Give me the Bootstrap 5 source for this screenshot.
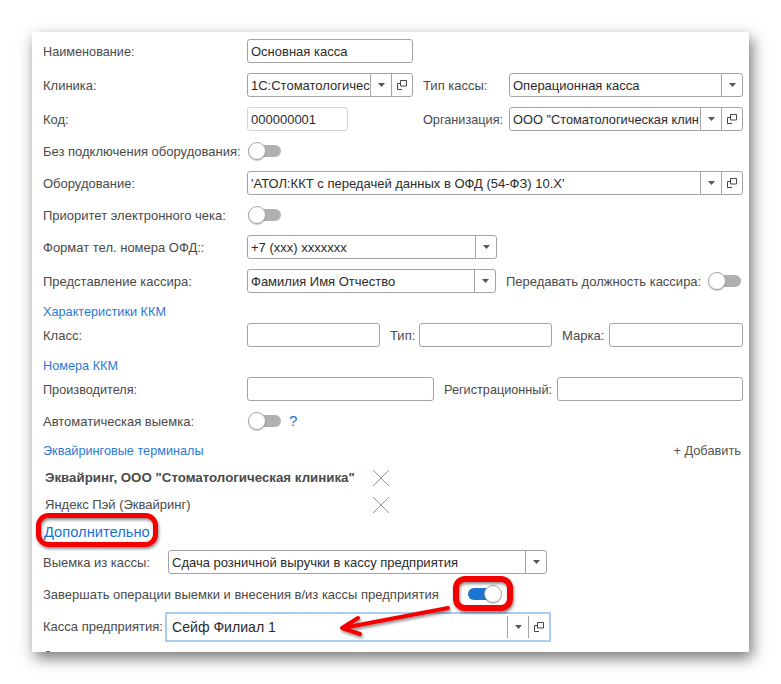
<!DOCTYPE html>
<html lang="ru">
<head>
<meta charset="utf-8">
<title>Касса</title>
<link href="https://cdn.jsdelivr.net/npm/bootstrap@5.3.0/dist/css/bootstrap.min.css" rel="stylesheet">
<style>
html,body{height:100%;overflow:hidden;background:#fff}
body{font-family:"Liberation Sans",Arial,sans-serif;font-size:13px;line-height:16px;color:#4a4a4a}
.sheet{position:relative;width:717px;height:620px;margin:32px 0 0 32px;padding:7px 6px 0 11px;background:#fff;box-shadow:3px 6px 14px rgba(0,0,0,.55);overflow:hidden}
.frow{height:24px;margin-bottom:10px}
.frow.low{height:20px}
.lbl{white-space:nowrap;flex:none;padding-top:1px}
.tight{font-size:12.700px}
.w204{width:204px}
.w125{width:125px}
.w122{width:122px}
.fld{height:24px;border:1px solid #a3a3a3;border-radius:3px;background:#fff;color:#2b2b2b;min-width:0;flex:none;overflow:hidden}
.fld.soft{border-color:#d5d5d5}
.fld.grow{flex:1 1 0}
.val{flex:1 1 0;min-width:0;padding:1px 3px 0;white-space:nowrap;overflow:hidden}
.val.fit{font-size:12.800px;padding-right:0}
.sb{flex:none;width:21px;height:100%;border-left:1px solid #a3a3a3;display:flex;align-items:center;justify-content:center}
.sb svg{display:block}
.sect{height:16px;margin-bottom:4px;color:#2a7ad8;padding-top:1px;font-size:12.700px}
.sect-t{height:18px;margin-bottom:5px;color:#2a7ad8;padding-top:1px;font-size:12.700px}
.tog{flex:none;position:relative;width:34px;height:20px}
.tog .trk{position:absolute;left:2px;right:0;top:4px;height:12px;border-radius:6px;background:#b0b0b0}
.tog .knb{position:absolute;left:1px;top:1px;width:18px;height:18px;border-radius:50%;background:#fff;border:1px solid #a6a6a6;box-shadow:0 1px 1px rgba(0,0,0,.2)}
.tog.on .trk{background:#1b74d0;right:2px;left:0}
.tog.on .knb{left:16px}
.term{height:27px;padding-left:2px}
.term .nm{width:327px;white-space:nowrap}
.b600{font-weight:700;font-size:13.300px}
.focusf{height:30px;border:2px solid #a9ccf2;border-radius:0;width:386px}
.focusf .sb{height:22px}
.focusf .val{padding:0 3px 1px 5px;font-size:14.100px}
.adv{margin:6px 0 10px 1px;height:16px;color:#1a73d4;text-decoration:none;display:block;width:max-content;font-size:14.700px}
.mrk{position:absolute;left:0;top:0;width:781px;height:684px;pointer-events:none;overflow:visible}
.w166{width:166px}.w101{width:101px}.w250{width:250px}.w249{width:249px}.w133{width:133px}.w187{width:187px}.w379{width:379px}.w86{width:86px}.w425{width:425px}
.w29{width:29px}.w47{width:47px}.w113{width:113px}
.flex-none{flex:none}.ms-10p{margin-left:10px}
.qm{margin-left:8px;color:#1a6fc0;font-size:15px}
.addb{padding-right:2px;color:#555;font-size:12.800px}
.finr{margin-bottom:0;height:30px}
.finr .lbl{padding-top:0}
.fin{margin-bottom:8px}
.pr2p{padding-right:2px}
.cutmark{width:4px;height:2px;margin:9px 0 0 3px;background:#2a7ad8}
</style>
</head>
<body>
<main class="sheet">
  <div class="frow d-flex align-items-center"><span class="lbl w204 tight">Наименование:</span><div class="fld d-flex align-items-center w166"><div class="val">Основная касса</div></div></div>
  <div class="frow d-flex align-items-center">
    <span class="lbl w204">Клиника:</span>
    <div class="fld d-flex align-items-center w166"><div class="val">1С:Стоматологичес</div><div class="sb"><svg width="7" height="4" viewBox="0 0 7 4"><path d="M0 0h7L3.500 4z" fill="#555"/></svg></div><div class="sb"><svg width="10" height="10" viewBox="0 0 10 10" fill="none" stroke="#444"><path d="M3.500.5h6v5.500h-6zM3 3.500H.5v6H5"/></svg></div></div>
    <span class="lbl ms-10p w86">Тип кассы:</span>
    <div class="fld grow d-flex align-items-center"><div class="val">Операционная касса</div><div class="sb"><svg width="7" height="4" viewBox="0 0 7 4"><path d="M0 0h7L3.500 4z" fill="#555"/></svg></div></div>
  </div>
  <div class="frow d-flex align-items-center">
    <span class="lbl w204">Код:</span>
    <div class="w166 flex-none"><div class="fld soft d-flex align-items-center w101"><div class="val">000000001</div></div></div>
    <span class="lbl ms-10p w86 tight">Организация:</span>
    <div class="fld grow d-flex align-items-center"><div class="val fit">ООО "Стоматологическая клин</div><div class="sb"><svg width="7" height="4" viewBox="0 0 7 4"><path d="M0 0h7L3.500 4z" fill="#555"/></svg></div><div class="sb"><svg width="10" height="10" viewBox="0 0 10 10" fill="none" stroke="#444"><path d="M3.500.5h6v5.500h-6zM3 3.500H.5v6H5"/></svg></div></div>
  </div>
  <div class="frow low d-flex align-items-center"><span class="lbl w204">Без подключения оборудования:</span><div class="tog"><div class="trk"></div><div class="knb"></div></div></div>
  <div class="frow d-flex align-items-center">
    <span class="lbl w204">Оборудование:</span>
    <div class="fld grow d-flex align-items-center"><div class="val">'АТОЛ:ККТ с передачей данных в ОФД (54-ФЗ) 10.Х'</div><div class="sb"><svg width="7" height="4" viewBox="0 0 7 4"><path d="M0 0h7L3.500 4z" fill="#555"/></svg></div><div class="sb"><svg width="10" height="10" viewBox="0 0 10 10" fill="none" stroke="#444"><path d="M3.500.5h6v5.500h-6zM3 3.500H.5v6H5"/></svg></div></div>
  </div>
  <div class="frow low d-flex align-items-center"><span class="lbl w204">Приоритет электронного чека:</span><div class="tog"><div class="trk"></div><div class="knb"></div></div></div>
  <div class="frow d-flex align-items-center">
    <span class="lbl w204">Формат тел. номера ОФД::</span>
    <div class="fld d-flex align-items-center w250"><div class="val">+7 (ххх) ххххххх</div><div class="sb"><svg width="7" height="4" viewBox="0 0 7 4"><path d="M0 0h7L3.500 4z" fill="#555"/></svg></div></div>
  </div>
  <div class="frow d-flex align-items-center pr2p">
    <span class="lbl w204">Представление кассира:</span>
    <div class="fld d-flex align-items-center w249"><div class="val">Фамилия Имя Отчество</div><div class="sb"><svg width="7" height="4" viewBox="0 0 7 4"><path d="M0 0h7L3.500 4z" fill="#555"/></svg></div></div>
    <span class="lbl ms-10p flex-grow-1">Передавать должность кассира:</span>
    <div class="tog"><div class="trk"></div><div class="knb"></div></div>
  </div>
  <div class="sect">Характеристики ККМ</div>
  <div class="frow d-flex align-items-center">
    <span class="lbl w204">Класс:</span>
    <div class="fld w133"></div>
    <span class="lbl ms-10p w29">Тип:</span>
    <div class="fld w133"></div>
    <span class="lbl ms-10p w47">Марка:</span>
    <div class="fld grow"></div>
  </div>
  <div class="sect">Номера ККМ</div>
  <div class="frow d-flex align-items-center">
    <span class="lbl w204 tight">Производителя:</span>
    <div class="fld w187"></div>
    <span class="lbl ms-10p w113 tight">Регистрационный:</span>
    <div class="fld grow"></div>
  </div>
  <div class="frow low d-flex align-items-center"><span class="lbl w204">Автоматическая выемка:</span><div class="tog"><div class="trk"></div><div class="knb"></div></div><span class="qm">?</span></div>
  <div class="sect-t d-flex justify-content-between align-items-center"><span>Эквайринговые терминалы</span><span class="addb">+ Добавить</span></div>
  <div class="term d-flex align-items-center"><div class="nm b600">Эквайринг, ООО "Стоматологическая клиника"</div><svg width="18" height="18" viewBox="0 0 18 18" stroke="#999" fill="none"><path d="M1 1l16 16M17 1L1 17"/></svg></div>
  <div class="term d-flex align-items-center"><div class="nm">Яндекс Пэй (Эквайринг)</div><svg width="18" height="18" viewBox="0 0 18 18" stroke="#999" fill="none"><path d="M1 1l16 16M17 1L1 17"/></svg></div>
  <a class="adv" href="#">Дополнительно</a>
  <div class="frow d-flex align-items-center">
    <span class="lbl w125">Выемка из кассы:</span>
    <div class="fld d-flex align-items-center w379"><div class="val">Сдача розничной выручки в кассу предприятия</div><div class="sb"><svg width="7" height="4" viewBox="0 0 7 4"><path d="M0 0h7L3.500 4z" fill="#555"/></svg></div></div>
  </div>
  <div class="frow low fin d-flex align-items-center"><span class="lbl w425 fintxt">Завершать операции выемки и внесения в/из кассы предприятия</span><div class="tog on"><div class="trk"></div><div class="knb"></div></div></div>
  <div class="frow d-flex align-items-center finr">
    <span class="lbl w122">Касса предприятия:</span>
    <div class="fld focusf d-flex align-items-center"><div class="val">Сейф Филиал 1</div><div class="sb"><svg width="7" height="4" viewBox="0 0 7 4"><path d="M0 0h7L3.500 4z" fill="#555"/></svg></div><div class="sb"><svg width="10" height="10" viewBox="0 0 10 10" fill="none" stroke="#444"><path d="M3.500.5h6v5.500h-6zM3 3.500H.5v6H5"/></svg></div></div>
  </div>
  <div class="cutmark"></div>
</main>
<svg class="mrk" viewBox="0 0 781 684" fill="none">
  <defs><filter id="sh" x="-20%" y="-20%" width="140%" height="140%"><feDropShadow dx="1" dy="2" stdDeviation="1.500" flood-color="#000" flood-opacity=".45"/></filter></defs>
  <g filter="url(#sh)" stroke="#f50000">
    <rect x="38.500" y="515.500" width="117" height="29" rx="10" stroke-width="5"/>
    <rect x="456" y="579" width="54" height="29" rx="9" stroke-width="6"/>
    <path d="M448 608L348 627" stroke-width="4" stroke-linecap="round"/>
    <path d="M358 618L342 628L360 634" stroke-width="4" stroke-linecap="round" stroke-linejoin="round"/>
  </g>
</svg>
</body>
</html>
